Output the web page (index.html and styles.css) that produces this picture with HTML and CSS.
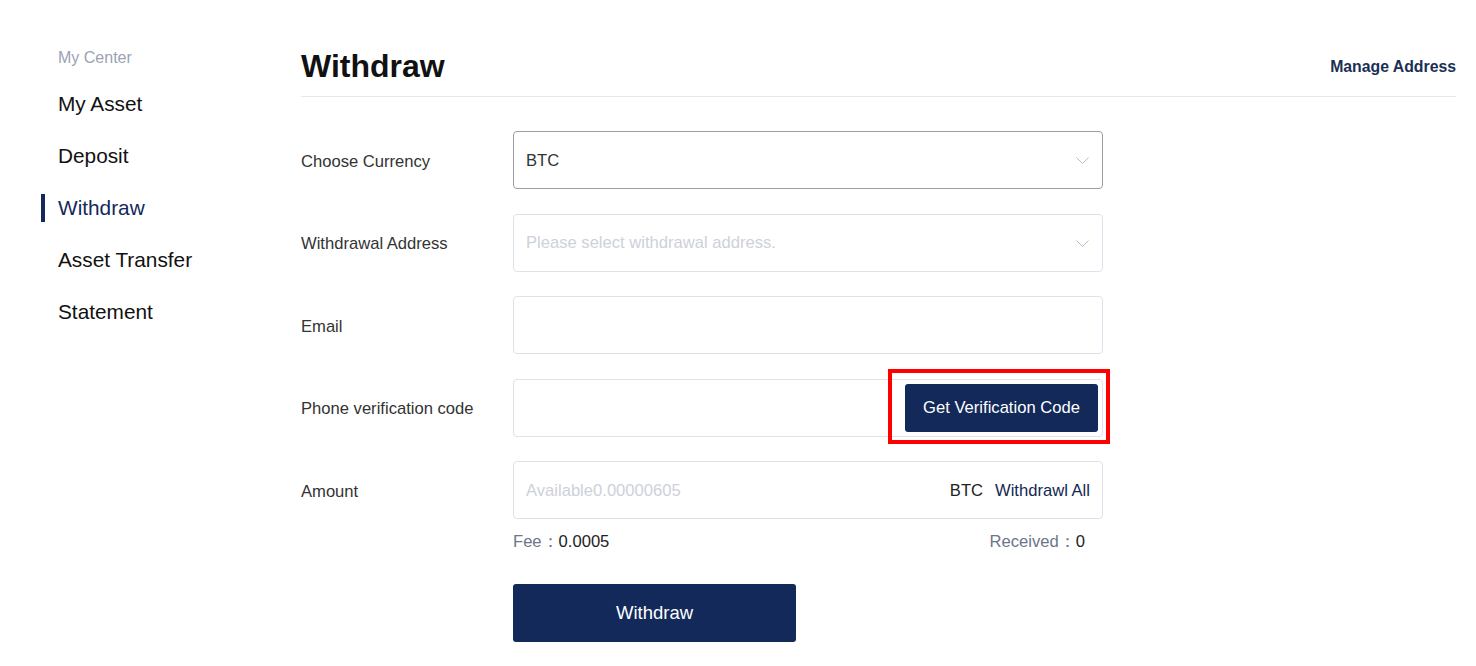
FILE: index.html
```html
<!DOCTYPE html>
<html lang="en">
<head>
    <meta charset="UTF-8">
    <meta name="viewport" content="width=device-width, initial-scale=1.0">
    <title>Withdraw</title>
    <link rel="stylesheet" href="styles.css">
</head>
<body>
    <div class="page">
        <aside class="sidebar">
            <div class="sidebar-title">My Center</div>
            <nav class="nav">
                <a href="#" class="nav-item">My Asset</a>
                <a href="#" class="nav-item">Deposit</a>
                <a href="#" class="nav-item active">Withdraw</a>
                <a href="#" class="nav-item">Asset Transfer</a>
                <a href="#" class="nav-item">Statement</a>
            </nav>
        </aside>

        <main class="main">
            <div class="header">
                <h1>Withdraw</h1>
                <a href="#" class="manage">Manage Address</a>
            </div>

            <form class="form">
                <div class="row">
                    <label class="label">Choose Currency</label>
                    <div class="field select focused">
                        <span class="value">BTC</span>
                        <svg class="chevron" width="13" height="7" viewBox="0 0 13 7"><path d="M0.5 0.5 L6.5 6.5 L12.5 0.5" fill="none" stroke="#b8bcc6" stroke-width="1"/></svg>
                    </div>
                </div>
                <div class="row">
                    <label class="label">Withdrawal Address</label>
                    <div class="field select">
                        <span class="placeholder">Please select withdrawal address.</span>
                        <svg class="chevron" width="13" height="7" viewBox="0 0 13 7"><path d="M0.5 0.5 L6.5 6.5 L12.5 0.5" fill="none" stroke="#b8bcc6" stroke-width="1"/></svg>
                    </div>
                </div>
                <div class="row">
                    <label class="label">Email</label>
                    <div class="field"></div>
                </div>
                <div class="row">
                    <label class="label">Phone verification code</label>
                    <div class="field code-field">
                        <button type="button" class="code-btn">Get Verification Code</button>
                        <span class="highlight"></span>
                    </div>
                </div>
                <div class="row">
                    <label class="label">Amount</label>
                    <div class="field">
                        <span class="placeholder">Available0.00000605</span>
                        <span class="unit">BTC</span>
                        <a href="#" class="all">Withdrawl All</a>
                    </div>
                </div>
                <div class="fee-row">
                    <span><span class="muted">Fee：</span>0.0005</span>
                    <span><span class="muted">Received：</span>0</span>
                </div>
                <button type="button" class="submit">Withdraw</button>
            </form>
        </main>
    </div>
</body>
</html>
```

FILE: styles.css
```css
body {
    margin: 0;
    font-family: 'Liberation Sans', Arial, sans-serif;
    color: #333;
    background: #fff;
}
a {
    text-decoration: none;
}
.page {
    display: flex;
    padding-top: 40px;
}
.sidebar {
    width: 243px;
    padding-left: 58px;
    flex-shrink: 0;
}
.sidebar-title {
    font-size: 16px;
    line-height: 36px;
    color: #9aa2b4;
}
.nav {
    display: flex;
    flex-direction: column;
    gap: 24px;
    padding-top: 14px;
}
.nav-item {
    display: block;
    font-size: 20.8px;
    line-height: 28px;
    color: #111;
}
.nav-item.active {
    color: #14295a;
    border-left: 4px solid #12295a;
    margin-left: -17px;
    padding-left: 13px;
}
.main {
    flex: 1;
    padding-right: 20px;
}
.header {
    display: flex;
    justify-content: space-between;
    align-items: center;
    height: 52px;
    padding-bottom: 4px;
    border-bottom: 1px solid #e6e8ee;
}
.header h1 {
    margin: 0;
    font-size: 32px;
    font-weight: bold;
    color: #111;
}
.manage {
    font-size: 15.8px;
    color: #1a2f55;
    font-weight: bold;
    padding-top: 2px;
}
.form {
    display: flex;
    flex-direction: column;
    gap: 24.5px;
    margin-top: 34px;
    font-size: 16.6px;
}
.row {
    display: flex;
    align-items: center;
}
.label {
    width: 212px;
    padding-top: 3px;
    color: #333;
}
.field {
    position: relative;
    box-sizing: border-box;
    width: 590px;
    height: 58px;
    border: 1px solid #dfe2ea;
    border-radius: 4px;
    display: flex;
    align-items: center;
    padding: 1px 12px 0;
}
.field.focused {
    border-color: #9c9ea4;
}
.value {
    color: #333;
    flex: 1;
}
.placeholder {
    color: #cdd1da;
    flex: 1;
}
.chevron {
    margin-right: 1px;
}
.code-field {
    justify-content: flex-end;
    padding: 0 4px 0 0;
}
.code-btn {
    width: 193px;
    height: 48px;
    border: none;
    border-radius: 3px;
    background: #12295a;
    color: #fff;
    font-family: inherit;
    font-size: 16.6px;
}
.highlight {
    position: absolute;
    left: 374px;
    top: -11px;
    width: 214px;
    height: 67px;
    border: 4px solid #ff0000;
}
.unit {
    color: #222;
    margin-right: 12px;
}
.all {
    color: #13284f;
}
.fee-row {
    display: flex;
    justify-content: space-between;
    width: 572px;
    margin-left: 212px;
    margin-top: -11.5px;
    line-height: 20px;
    color: #222;
}
.muted {
    color: #6c758a;
}
.submit {
    width: 283px;
    height: 58px;
    margin-left: 212px;
    margin-top: 7px;
    border: none;
    border-radius: 3px;
    background: #12295a;
    color: #fff;
    font-family: inherit;
    font-size: 18.5px;
}
```
